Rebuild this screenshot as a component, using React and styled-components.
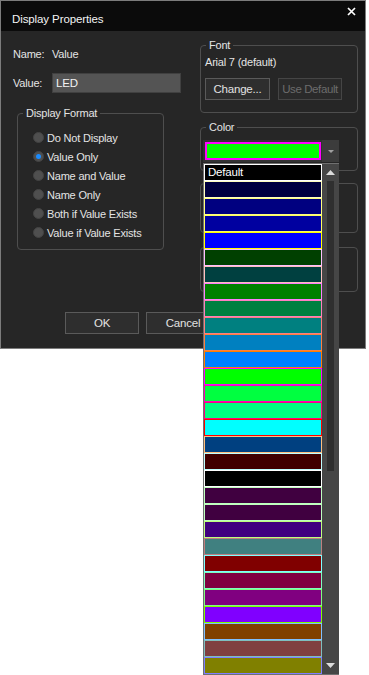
import React from "react";
import styled, { createGlobalStyle } from "styled-components";

const Global = createGlobalStyle`
  html, body { margin: 0; padding: 0; background: #ffffff; }
  html, body, #root { min-height: 675px; }
  body { font-family: "Liberation Sans", Arial, sans-serif; }
  * { box-sizing: border-box; }
`;

const Page = styled.div`
  min-height: 675px;
  overflow: visible;
`;

const Window = styled.div`
  position: relative;
  width: 366px;
  height: 349px;
  border: 1px solid #7c7c7c;
  background: #262626;
  display: flex;
  flex-direction: column;
  font-size: 11px;
  letter-spacing: -0.2px;
  color: #e4e4e4;
`;

const TitleBar = styled.div`
  height: 30px;
  flex: none;
  background: #0b0b0b;
  display: flex;
  justify-content: space-between;
  align-items: flex-start;
  padding: 0 9px 0 11px;
`;

const Title = styled.div`
  margin-top: 10px;
  font-size: 11.5px;
  line-height: 16px;
  letter-spacing: -0.1px;
  color: #f4f4f4;
`;

const Close = styled.svg`
  margin-top: 6px;
  width: 9px;
  height: 9px;
`;

const Main = styled.div`
  display: flex;
  align-items: flex-start;
`;

const LeftCol = styled.div`
  width: 199px;
  padding: 16px 0 0 12px;
  display: flex;
  flex-direction: column;
`;

const Row = styled.div`
  display: flex;
  align-items: center;
  height: ${(p) => p.$h}px;
  margin-top: ${(p) => p.$mt || 0}px;
`;

const Label = styled.span`
  width: 39px;
  line-height: 14px;
`;

const Input = styled.div`
  width: 129px;
  height: 20px;
  background: #545454;
  border: 1px solid #404040;
  padding-left: 3px;
  line-height: 18px;
  color: #f2f2f2;
  font-size: 11.5px;
`;

const Group = styled.fieldset`
  margin: ${(p) => p.$m};
  width: ${(p) => p.$w}px;
  min-width: 0;
  border: 1px solid #4e4e4e;
  border-radius: 4px;
  padding: ${(p) => p.$p};
`;

const Legend = styled.legend`
  margin-left: ${(p) => p.$ml}px;
  padding: 0 3px;
  line-height: 14px;
  font-size: 11px;
  color: #e4e4e4;
`;

const Box = styled.div`
  margin-top: ${(p) => p.$mt}px;
  height: ${(p) => p.$h}px;
  width: 158px;
  border: 1px solid #4e4e4e;
  border-radius: 4px;
`;

const RadioList = styled.div`
  display: flex;
  flex-direction: column;
`;

const RadioRow = styled.div`
  height: 19px;
  display: flex;
  align-items: center;
  gap: 3px;
`;

const RadioCircle = styled.span`
  width: 11px;
  height: 11px;
  border-radius: 50%;
  background: #4f4f4f;
  border: 1px solid #444;
  display: flex;
  align-items: center;
  justify-content: center;
  &::after {
    content: "";
    width: 5px;
    height: 5px;
    border-radius: 50%;
    background: ${(p) => (p.$on ? "#1a8cff" : "transparent")};
  }
`;

const RightCol = styled.div`
  width: 158px;
  margin-top: 7px;
  display: flex;
  flex-direction: column;
`;

const Text = styled.div`
  line-height: 14px;
`;

const ButtonRow = styled.div`
  display: flex;
  gap: ${(p) => p.$gap}px;
  margin: ${(p) => p.$m};
`;

const Button = styled.div`
  width: ${(p) => p.$w}px;
  height: 22px;
  background: ${(p) => (p.$disabled ? "#2a2a2a" : "#2e2e2e")};
  border: 1px solid ${(p) => (p.$disabled ? "#454545" : "#5a5a5a")};
  color: ${(p) => (p.$disabled ? "#6c6c6c" : "#e2e2e2")};
  display: flex;
  align-items: center;
  justify-content: center;
  font-size: 11.5px;
  letter-spacing: ${(p) => (p.$disabled ? "-0.4px" : "-0.2px")};
`;

const ComboWrap = styled.div`
  position: relative;
  width: 136px;
  height: 22px;
  background: #333333;
  display: flex;
  align-items: center;
`;

const ComboValue = styled.div`
  margin-left: 2px;
  width: 116px;
  height: 18px;
  background: #00ff00;
  border: 2px solid #ff00ff;
`;

const ComboArrow = styled.div`
  margin-left: 1px;
  width: 17px;
  height: 22px;
  background: #3c3c3c;
  display: flex;
  align-items: center;
  justify-content: center;
`;

const DropList = styled.div`
  position: absolute;
  top: calc(100% + 1px);
  left: 0;
  width: 136px;
  height: 512px;
  display: flex;
  border-left: 1px solid #707070;
  border-top: 1px solid #707070;
  border-bottom: 1px solid #707070;
  background: #262626;
  z-index: 10;
`;

const Items = styled.div`
  width: 118px;
  display: flex;
  flex-direction: column;
`;

const Item = styled.div`
  height: 17px;
  flex: none;
  border: 1px solid ${(p) => p.$b};
  background: ${(p) => p.$c};
  color: #ffffff;
  padding-left: 3px;
  line-height: 15px;
  font-size: 11.5px;
`;

const Scrollbar = styled.div`
  width: 17px;
  background: #464646;
  display: flex;
  flex-direction: column;
`;

const ScrollBtn = styled.div`
  height: 17px;
  display: flex;
  align-items: center;
  justify-content: center;
  flex: none;
`;

const Thumb = styled.div`
  margin-left: 5px;
  width: 7px;
  height: 290px;
  flex: none;
  background: #2f2f2f;
`;

const Spacer = styled.div`
  flex: 1;
`;

const Footer = styled.div`
  display: flex;
  gap: 7px;
  margin: 20px 0 0 64px;
`;

const colors = [
  "#000040", "#000080", "#0000a0", "#0000ff", "#004000", "#004040",
  "#008000", "#008040", "#008080", "#0080c0", "#0080ff", "#00ff00",
  "#00ff40", "#00ff80", "#00ffff", "#004080", "#400000", "#000000",
  "#400040", "#400040", "#400080", "#408080", "#800000", "#800040",
  "#800080", "#8000ff", "#804000", "#804040", "#808000",
];

const invert = (hex) => {
  const n = parseInt(hex.slice(1), 16);
  return "#" + (0xffffff - n).toString(16).padStart(6, "0");
};

const radios = [
  "Do Not Display",
  "Value Only",
  "Name and Value",
  "Name Only",
  "Both if Value Exists",
  "Value if Value Exists",
];

const Tri = ({ up, w, h, color }) => (
  <svg width={w} height={h} viewBox={`0 0 ${w} ${h}`}>
    <polygon
      points={up ? `0,${h} ${w},${h} ${w / 2},0` : `0,0 ${w},0 ${w / 2},${h}`}
      fill={color}
    />
  </svg>
);

export default function App() {
  return (
    <Page>
      <Global />
      <Window>
        <TitleBar>
          <Title>Display Properties</Title>
          <Close viewBox="0 0 9 9">
            <path d="M1 1 L8 8 M8 1 L1 8" stroke="#ffffff" strokeWidth="1.7" />
          </Close>
        </TitleBar>
        <Main>
          <LeftCol>
            <Row $h={14}>
              <Label>Name:</Label>
              <span>Value</span>
            </Row>
            <Row $h={20} $mt={12}>
              <Label>Value:</Label>
              <Input>LED</Input>
            </Row>
            <Group $m="13px 0 0 4px" $w={147} $p="8px 0 7px 15px">
              <Legend $ml={-10}>Display Format</Legend>
              <RadioList>
                {radios.map((r, i) => (
                  <RadioRow key={r}>
                    <RadioCircle $on={i === 1} />
                    <span>{r}</span>
                  </RadioRow>
                ))}
              </RadioList>
            </Group>
          </LeftCol>
          <RightCol>
            <Group $m="0" $w={158} $p="3px 4px 12px 4px">
              <Legend $ml={1}>Font</Legend>
              <Text>Arial 7 (default)</Text>
              <ButtonRow $gap={8} $m="9px 0 0 0">
                <Button $w={65}>Change...</Button>
                <Button $w={64} $disabled>
                  Use Default
                </Button>
              </ButtonRow>
            </Group>
            <Group $m="7px 0 0 0" $w={158} $p="6px 0 8px 2px">
              <Legend $ml={3}>Color</Legend>
              <ComboWrap>
                <ComboValue />
                <ComboArrow>
                  <Tri w={6} h={3} color="#a0a0a0" />
                </ComboArrow>
                <DropList>
                  <Items>
                    <Item $c="#000000" $b="#ffffff">
                      Default
                    </Item>
                    {colors.map((c, i) => (
                      <Item key={i} $c={c} $b={invert(c)} />
                    ))}
                  </Items>
                  <Scrollbar>
                    <ScrollBtn>
                      <Tri up w={9} h={5} color="#dcdcdc" />
                    </ScrollBtn>
                    <Thumb />
                    <Spacer />
                    <ScrollBtn>
                      <Tri w={9} h={5} color="#dcdcdc" />
                    </ScrollBtn>
                  </Scrollbar>
                </DropList>
              </ComboWrap>
            </Group>
            <Box $mt={12} $h={50} />
            <Box $mt={14} $h={45} />
          </RightCol>
        </Main>
        <Footer>
          <Button $w={74}>OK</Button>
          <Button $w={74}>Cancel</Button>
        </Footer>
      </Window>
    </Page>
  );
}
